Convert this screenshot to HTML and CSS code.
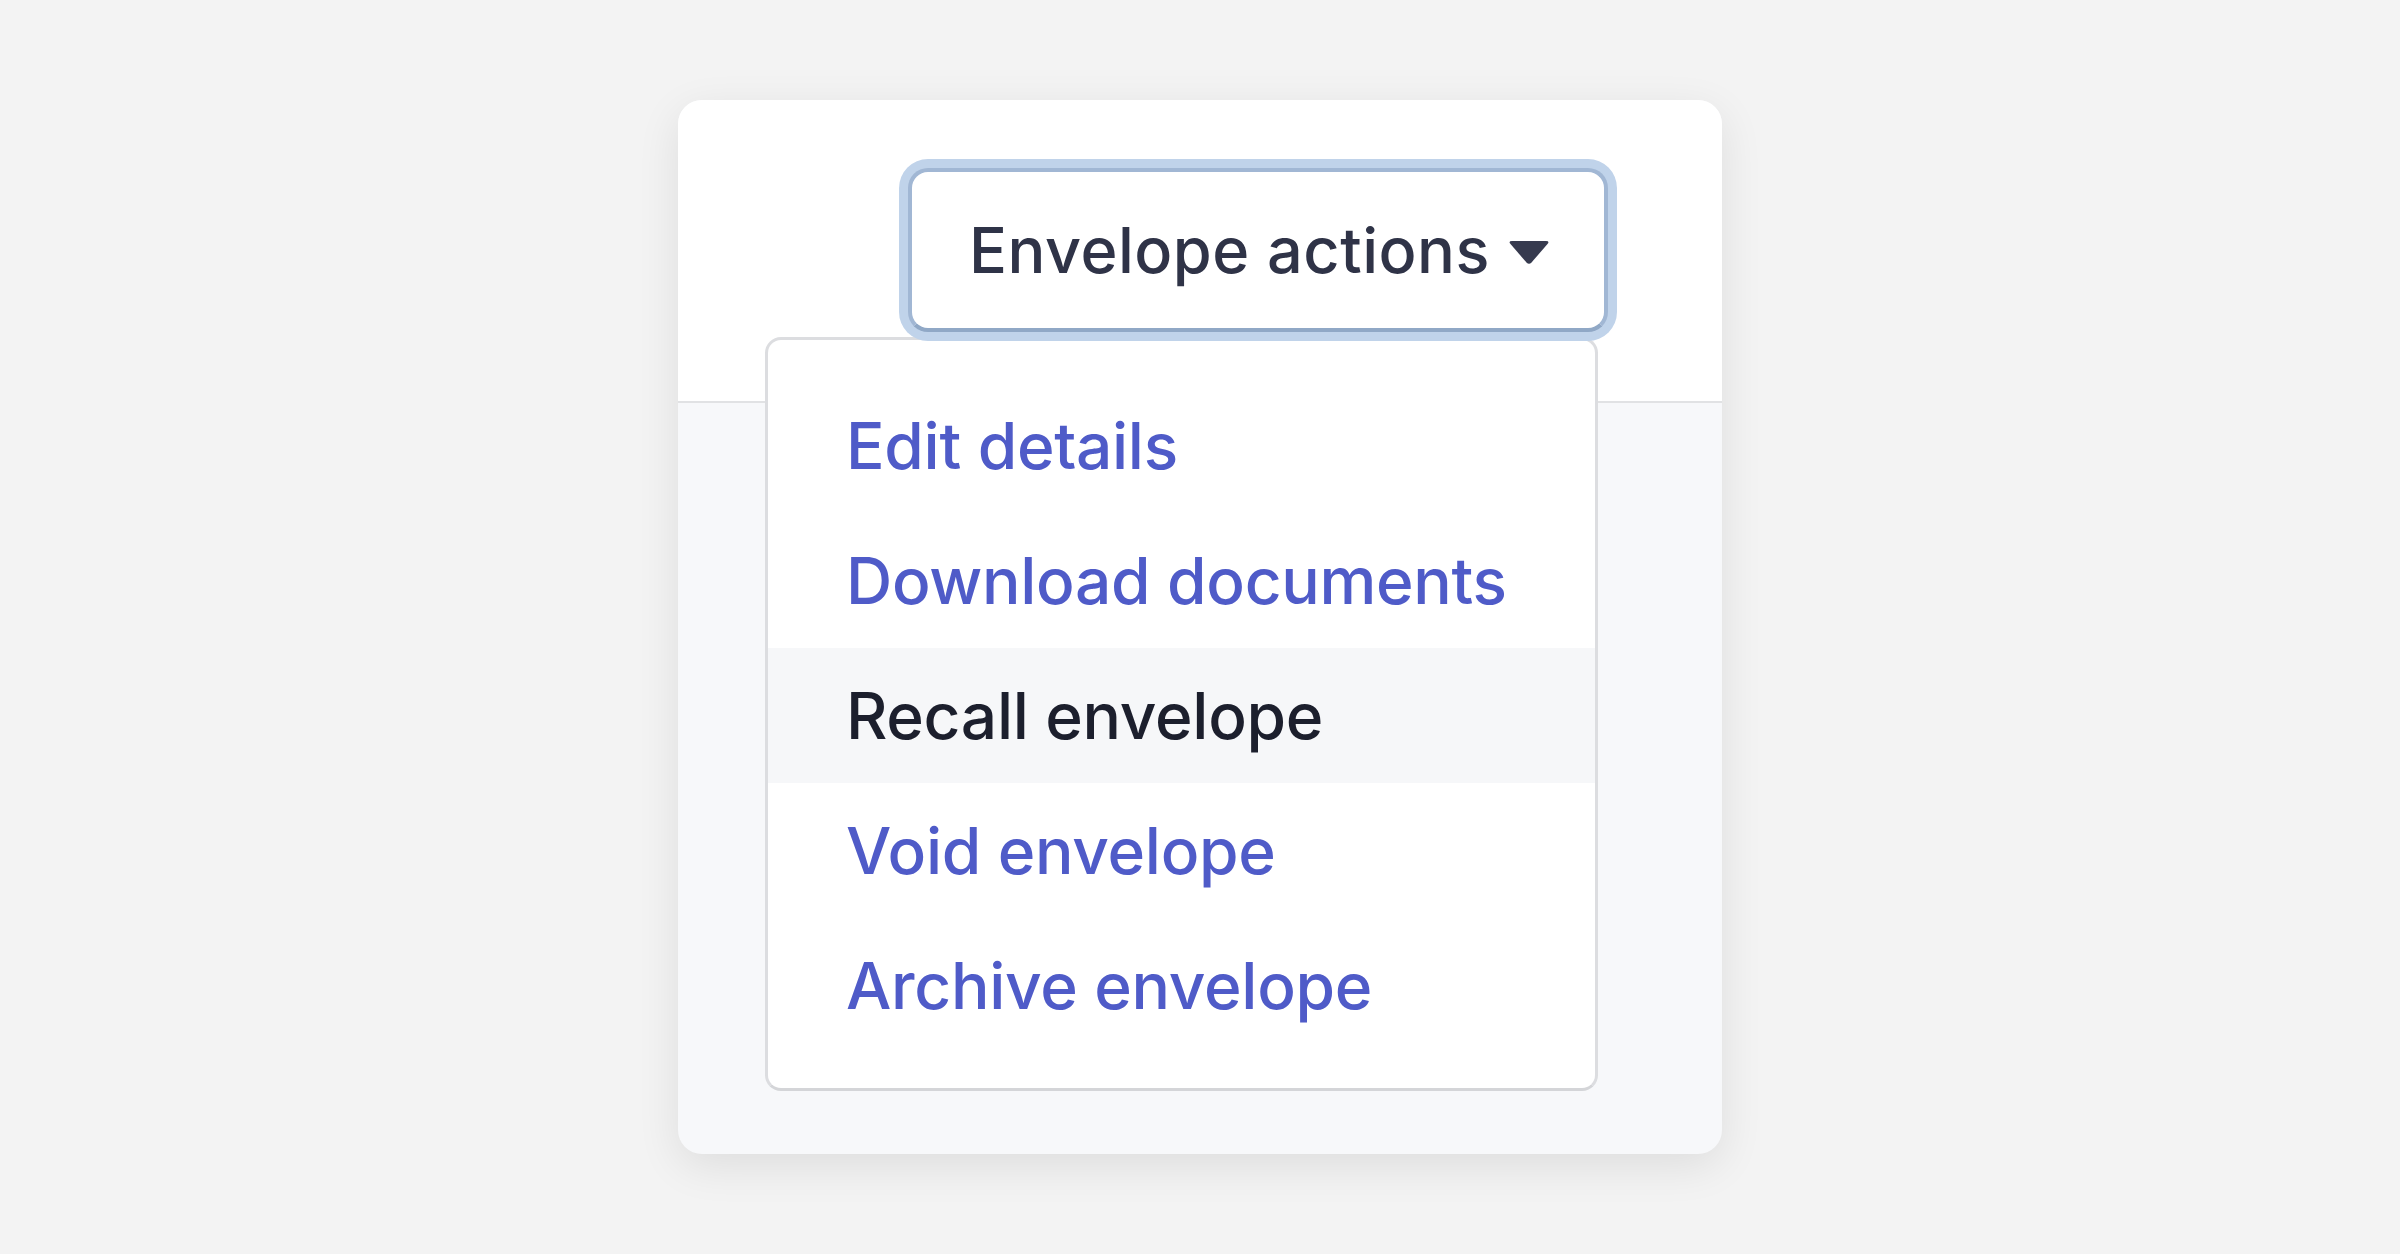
FILE: index.html
```html
<!DOCTYPE html>
<html lang="en">
<head>
<meta charset="utf-8">
<title>Envelope actions</title>
<link rel="stylesheet" href="styles.css">
</head>
<body>
<main class="stage">
  <section class="card">
    <header class="card-head">
      <div class="dropdown">
        <button class="dd-toggle" type="button">
          <span class="dd-label">Envelope actions</span>
          <svg class="caret" viewBox="0 0 42 25" width="42" height="25" aria-hidden="true"><path d="M4 1 H38 Q42 1 39.5 4 L23.5 22.5 Q21 25 18.5 22.5 L2.5 4 Q0 1 4 1 Z" fill="#363a4e"/></svg>
        </button>
        <ul class="dd-menu">
          <li class="dd-item">Edit details</li>
          <li class="dd-item">Download documents</li>
          <li class="dd-item is-active">Recall envelope</li>
          <li class="dd-item">Void envelope</li>
          <li class="dd-item">Archive envelope</li>
        </ul>
      </div>
    </header>
    <div class="card-body"></div>
  </section>
</main>
</body>
</html>
```

FILE: styles.css
```css
html, body {
  margin: 0;
  padding: 0;
}
body {
  background: #f3f3f3;
  font-family: Inter, "Noto Sans", sans-serif;
}
.stage {
  height: 1254px;
  display: flex;
  align-items: center;
  justify-content: center;
}
.card {
  width: 1044px;
  height: 1054px;
  border-radius: 24px;
  background: #f7f8fa;
  box-shadow: 0 12px 44px rgba(0, 0, 0, 0.09);
  display: flex;
  flex-direction: column;
  overflow: hidden;
}
.card-head {
  height: 303px;
  flex: none;
  background: #ffffff;
  border-bottom: 2px solid #e1e2e4;
  display: flex;
  justify-content: flex-end;
  align-items: flex-start;
  padding: 68px 114px 0 0;
  box-sizing: border-box;
}
.card-body {
  flex: 1;
}
.dropdown {
  position: relative;
}
.dd-toggle {
  position: relative;
  z-index: 2;
  box-sizing: border-box;
  width: 700px;
  height: 164px;
  display: flex;
  align-items: center;
  gap: 18px;
  padding: 0 0 0 57px;
  background: #ffffff;
  border: 4px solid #a1b7d4;
  border-bottom-color: #90a8c6;
  border-radius: 20px;
  box-shadow: 0 0 0 9px #c0d3ea;
  font-family: inherit;
  font-size: 63px;
  font-weight: 500;
  letter-spacing: 0.5px;
  color: #2f3347;
  cursor: pointer;
}
.dd-label {
  line-height: 1;
}
.caret {
  flex: none;
  margin-top: 4px;
}
.dd-menu {
  position: absolute;
  z-index: 1;
  top: 169px;
  right: 10px;
  width: 833px;
  box-sizing: border-box;
  margin: 0;
  padding: 38px 0 35px;
  list-style: none;
  background: #ffffff;
  border: 3px solid #dcdde0;
  border-bottom-color: #d4d5d8;
  border-radius: 16px;
}
.dd-item {
  height: 135px;
  display: flex;
  align-items: center;
  padding-left: 78px;
  font-size: 64px;
  font-weight: 500;
  letter-spacing: -0.3px;
  color: #4f5bc8;
}
.dd-item.is-active {
  background: #f6f7f9;
  color: #1c1f2d;
}
```
